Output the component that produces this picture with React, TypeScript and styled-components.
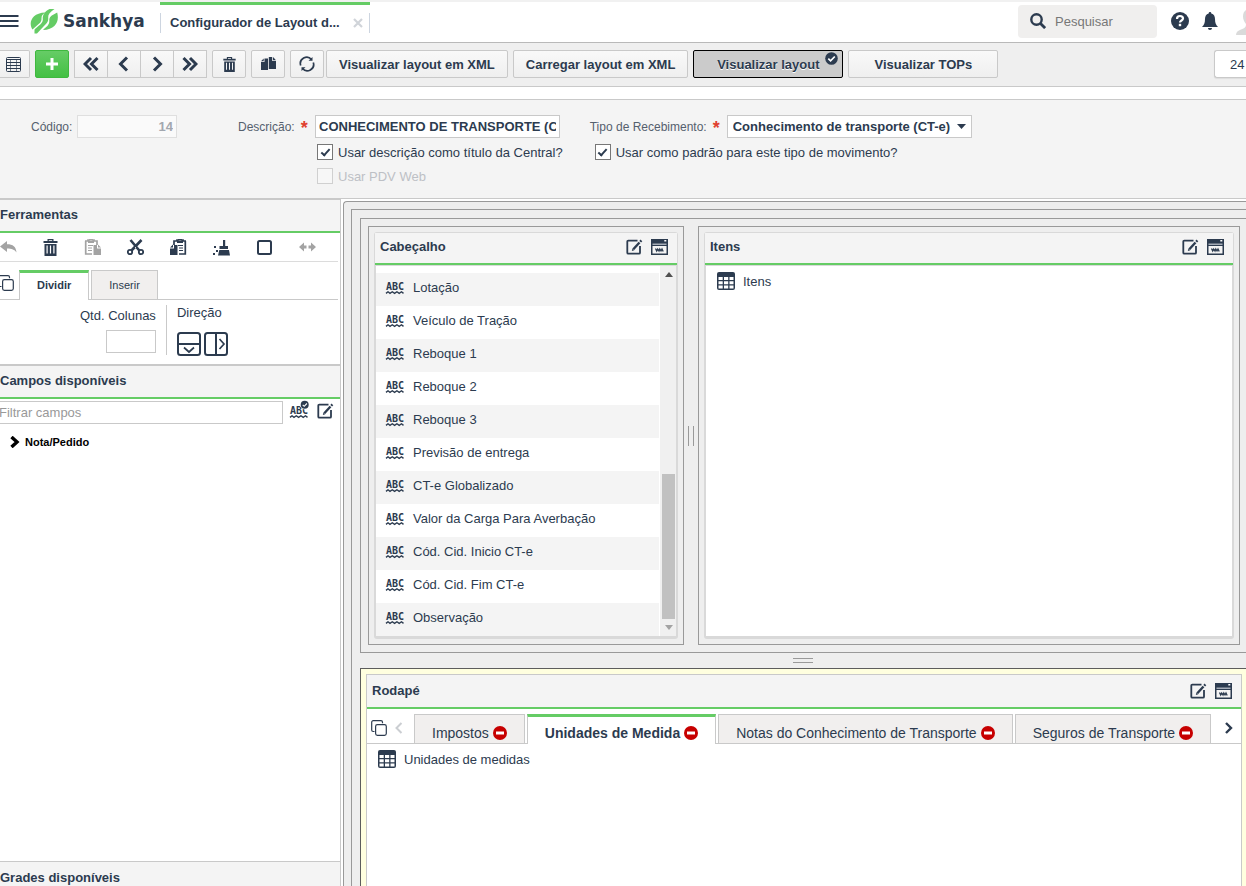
import React from "react";
import styled, { createGlobalStyle, css } from "styled-components";

const ink = "#2c3b4f";
const green = "#65cc65";
const line = "#c9c9c9";

const GlobalStyle = createGlobalStyle`
  *, *::before, *::after { box-sizing: border-box; }
  html, body { margin: 0; background: #fff; }
  body, button, input, select {
    font-family: "Liberation Sans", Arial, sans-serif;
    font-size: 13px;
    color: ${ink};
  }
  button { margin: 0; padding: 0; border: 0; background: none; cursor: pointer; }
  svg { display: block; flex: none; }
  h1, h2, ul { margin: 0; padding: 0; }
  ul { list-style: none; }
`;

/* ---------- shell ---------- */

const Page = styled.div`
  height: 100vh;
  display: flex;
  flex-direction: column;
  overflow: hidden;
`;

const Header = styled.header`
  flex: none;
  height: 43px;
  display: flex;
  align-items: flex-start;
  border-top: 2px solid #f1f1f1;
  border-bottom: 1px solid #b9b9b9;
  overflow: hidden;
`;

const HeaderPart = styled.div<{ $gap?: number }>`
  height: 38px;
  display: flex;
  align-items: center;
  gap: ${(p) => p.$gap ?? 0}px;
`;

const Brand = styled.a`
  display: flex;
  align-items: center;
  gap: 5px;
  width: 130px;
  margin-left: 11px;
  color: ${ink};
  text-decoration: none;
  font: bold 17px "DejaVu Sans", sans-serif;
`;

const PageTab = styled.div`
  width: 210px;
  height: 38px;
  border-top: 3px solid ${green};
  display: flex;
  align-items: center;
`;

const PageTabInner = styled.div`
  flex: 1;
  height: 20px;
  padding: 0 6px 0 9px;
  display: flex;
  align-items: center;
  justify-content: space-between;
  border: solid #cdd5e0;
  border-width: 0 1px;
  font-weight: bold;
`;

const SearchBox = styled.label`
  display: flex;
  align-items: center;
  gap: 9px;
  width: 139px;
  height: 33px;
  padding-left: 12px;
  border-radius: 4px;
  background: #f0efee;
  input {
    flex: 1;
    min-width: 0;
    border: 0;
    padding: 0;
    background: none;
    outline: none;
  }
  input::placeholder { color: #777; opacity: 1; }
`;

const HeaderRight = styled(HeaderPart)`
  margin-left: auto;
  margin-right: -18px;
`;

const HeaderIcons = styled.div`
  display: flex;
  align-items: center;
  margin-left: 14px;
  gap: 13px;
`;

const Avatar = styled.span`
  margin-left: 5px;
  margin-top: 2px;
`;

/* ---------- toolbar ---------- */

const Toolbar = styled.div`
  flex: none;
  height: 44px;
  padding-top: 7px;
  display: flex;
  gap: 5px;
  background: #efefef;
  border-bottom: 1px solid ${line};
  overflow: hidden;
`;

const ToolGroup = styled.div<{ $gap?: number }>`
  display: flex;
  gap: ${(p) => p.$gap ?? 0}px;
`;

const ToolButton = styled.button<{ $tone?: "primary" | "pressed"; $wide?: boolean; $cut?: boolean }>`
  position: relative;
  display: flex;
  align-items: center;
  justify-content: center;
  height: 28px;
  min-width: ${(p) => (p.$wide ? 150 : 34)}px;
  padding: 0 ${(p) => (p.$wide ? 12 : 0)}px;
  border: 1px solid ${line};
  border-radius: 2px;
  background: linear-gradient(#f9f9f9, #efefef);
  font-weight: bold;
  white-space: nowrap;
  ${(p) => p.$cut && css`
    min-width: 30px;
    padding-right: 2px;
    border-left: 0;
    border-radius: 0 2px 2px 0;
  `}
  ${(p) => p.$tone === "primary" && css`
    border-color: #3fb83f;
    background: linear-gradient(#66cc66, #43c043);
  `}
  ${(p) => p.$tone === "pressed" && css`
    border-color: #000;
    background: #cbcbcb;
    text-shadow: 0 1px 0 #fff;
  `}
`;

const NavGroup = styled.div`
  display: flex;
  ${ToolButton} + ${ToolButton} { margin-left: -1px; }
  ${ToolButton} { border-radius: 0; }
`;

const PressedMark = styled.span`
  position: absolute;
  top: 1px;
  right: 4px;
`;

const PageCount = styled.div`
  margin-left: auto;
  width: 32px;
  height: 28px;
  padding-left: 15px;
  line-height: 27px;
  border: 1px solid ${line};
  border-right: 0;
  border-radius: 3px 0 0 3px;
  background: #fff;
  box-shadow: 0 1px 1px #ddd;
`;

/* ---------- form ---------- */

const FormArea = styled.form`
  flex: none;
  display: flex;
  margin-top: 12px;
  padding: 15px 0 14px 31px;
  background: #f4f4f4;
  border-top: 1px solid ${line};
  border-bottom: 1px solid ${line};
  white-space: nowrap;
`;

const FormColumn = styled.div<{ $before?: number }>`
  margin-left: ${(p) => p.$before ?? 0}px;
`;

const Field = styled.div`
  display: flex;
  align-items: center;
  height: 23px;
`;

const FieldLabel = styled.label<{ $w: number }>`
  width: ${(p) => p.$w}px;
  display: flex;
  gap: 6px;
  font-size: 12px;
  color: #55606e;
  span {
    color: #e0402f;
    font-size: 18px;
    font-weight: bold;
    line-height: 16px;
    height: 10px;
  }
`;

const TextInput = styled.input<{ $w?: string }>`
  width: ${(p) => p.$w ?? "100%"};
  height: 23px;
  padding: 0 3px;
  border: 1px solid ${line};
  border-radius: 0;
  background: #fff;
  font-weight: bold;
  outline: none;
  &:disabled {
    border-color: #dfdfdf;
    background: #fafafa;
    color: #a2a7af;
    text-align: right;
  }
  &::placeholder { color: #999; font-weight: normal; opacity: 1; }
`;

const FilterInput = styled(TextInput)`
  flex: 1;
  min-width: 0;
  margin-left: -5px;
`;

const SelectWrap = styled.div`
  display: grid;
  align-items: center;
  width: 245px;
  height: 23px;
  select, svg { grid-area: 1 / 1; }
  svg { justify-self: end; margin-right: 6px; pointer-events: none; }
  select {
    width: 100%;
    height: 23px;
    padding: 0 18px 0 5px;
    appearance: none;
    border: 1px solid ${line};
    border-radius: 0;
    background: #fff;
    font-weight: bold;
  }
`;

const CheckLine = styled.label<{ $indent: number; $off?: boolean }>`
  display: flex;
  align-items: center;
  gap: 5px;
  height: 16px;
  margin-top: ${(p) => (p.$off ? 8 : 6)}px;
  margin-left: ${(p) => p.$indent}px;
  color: ${(p) => (p.$off ? "#bdc0c5" : ink)};
`;

const CheckInput = styled.input`
  appearance: none;
  width: 16px;
  height: 16px;
  margin: 0;
  border: 1px solid #777;
  background: #fff;
  display: grid;
  place-items: center;
  &:disabled { border-color: #d0d0d0; background: #f7f7f7; }
  &:checked::after {
    content: "";
    width: 5px;
    height: 9px;
    margin-bottom: 2px;
    border: solid ${ink};
    border-width: 0 2px 2px 0;
    transform: rotate(42deg);
  }
`;

/* ---------- side panel ---------- */

const Workspace = styled.main`
  flex: 1;
  min-height: 0;
  display: flex;
`;

const Side = styled.aside`
  flex: none;
  width: 341px;
  display: flex;
  flex-direction: column;
  border-top: 1px solid ${line};
  border-right: 1px solid ${line};
  overflow: hidden;
`;

const SideTitle = styled.h2<{ $ruled?: boolean }>`
  flex: none;
  height: ${(p) => (p.$ruled ? 35 : 33)}px;
  line-height: 29px;
  font-size: 13px;
  background: #f4f4f4;
  border-bottom: 2px solid ${green};
  border-top: ${(p) => (p.$ruled ? 2 : 0)}px solid ${line};
`;

const SideFooter = styled.div`
  flex: none;
  height: 25px;
  overflow: hidden;
  ${SideTitle} { border-top-width: 1px; line-height: 31px; }
`;

const IconRow = styled.div`
  flex: none;
  display: flex;
  align-items: center;
  justify-content: space-between;
  height: 29px;
  margin-right: 2px;
  padding-right: 22px;
  border-bottom: 1px solid #dcdcdc;
`;

const IconButton = styled.button<{ $off?: boolean }>`
  display: flex;
  color: ${(p) => (p.$off ? "#a3a3a3" : ink)};
`;

const SideTabs = styled.div`
  flex: none;
  display: flex;
  align-items: flex-end;
  gap: 2px;
  height: 38px;
  margin-right: 2px;
  border-bottom: 1px solid ${line};
`;

const TabButton = styled.button<{ $on?: boolean; $big?: boolean }>`
  display: flex;
  align-items: center;
  justify-content: center;
  gap: 4px;
  height: ${(p) => (p.$on ? 30 : 29)}px;
  margin-bottom: ${(p) => (p.$on ? -1 : 0)}px;
  padding: ${(p) => (p.$big ? "8px 17px 0" : "0 17px")};
  border: 1px solid ${line};
  border-bottom: 0;
  background: #f1efee;
  font-size: ${(p) => (p.$big ? 14 : 11)}px;
  white-space: nowrap;
  ${(p) => p.$on && css`
    background: #fff;
    border-top: 3px solid ${green};
    font-weight: bold;
    padding-top: ${p.$big ? 4 : 0}px;
    padding-bottom: ${p.$big ? 0 : 4}px;
  `}
`;

const TabLead = styled.div`
  width: 17px;
  height: 100%;
  display: flex;
  align-items: center;
  justify-content: flex-end;
  padding-top: 4px;
  button { margin-right: 3px; }
`;

const SplitTools = styled.div`
  flex: none;
  display: flex;
  height: 64px;
  padding: 5px 0 9px 80px;
`;

const ColumnsField = styled.div`
  display: flex;
  flex-direction: column;
  align-items: flex-end;
  gap: 7px;
  height: 50px;
  padding: 3px 10px 0 0;
  border-right: 1px solid ${line};
  line-height: 15px;
`;

const DirectionField = styled.div`
  padding-left: 10px;
  line-height: 15px;
  div { display: flex; gap: 3px; margin-top: 12px; }
`;

const FilterRow = styled.div`
  flex: none;
  display: flex;
  align-items: flex-start;
  height: 25px;
  padding: 2px 6px 0 0;
`;

const FilterIcons = styled.div`
  display: flex;
  align-items: flex-end;
  gap: 8px;
  margin-left: 7px;
`;

const Tree = styled.ul`
  flex: 1;
  min-height: 0;
  padding: 9px 0 0 9px;
  button {
    display: flex;
    align-items: center;
    gap: 4px;
    height: 18px;
    font-size: 11px;
    font-weight: bold;
    color: #000;
  }
`;

/* ---------- canvas ---------- */

const Canvas = styled.section`
  flex: 1;
  min-width: 0;
  margin: 2px 0 0 2px;
  padding: 7px 0 0 7px;
  display: flex;
  border: solid #999;
  border-width: 1px 0 0 1px;
  border-radius: 4px 0 0 0;
  background: #eee;
`;

const CanvasInner = styled.div`
  flex: 1;
  min-width: 0;
  padding: 8px 0 0 8px;
  display: flex;
  flex-direction: column;
  border: solid #999;
  border-width: 1px 0 0 1px;
`;

const SplitRow = styled.div`
  flex: none;
  display: flex;
  padding: 7px 6px 7px 7px;
  border: solid #999;
  border-width: 1px 0 1px 1px;
`;

const Slot = styled.div<{ $w?: number }>`
  flex: ${(p) => (p.$w ? `0 0 ${p.$w}px` : 1)};
  min-width: 0;
  padding: 5px;
  display: flex;
  border: 1px solid #999;
`;

const FooterSlot = styled.div`
  flex: 1;
  min-height: 0;
  display: flex;
  padding: 5px 4px 0 5px;
  border: solid #5c5c5c;
  border-width: 1px 0 0 1px;
  background: #ffffdf;
`;

const Grip = styled.div<{ $across?: boolean }>`
  flex: none;
  display: flex;
  align-items: center;
  justify-content: center;
  width: ${(p) => (p.$across ? "auto" : "14px")};
  height: ${(p) => (p.$across ? "15px" : "auto")};
  &::before {
    content: "";
    width: ${(p) => (p.$across ? 20 : 6)}px;
    height: ${(p) => (p.$across ? 5 : 20)}px;
    border: solid #999;
    border-width: ${(p) => (p.$across ? "1px 0" : "0 1px")};
  }
`;

const Panel = styled.div<{ $flat?: boolean }>`
  flex: 1;
  min-width: 0;
  display: flex;
  flex-direction: column;
  border: 1px solid ${(p) => (p.$flat ? line : "#d9d9d9")};
  border-bottom-width: ${(p) => (p.$flat ? 0 : 3)}px;
  border-radius: ${(p) => (p.$flat ? 0 : 3)}px;
  background: #fff;
`;

const PanelHead = styled.div<{ $tall?: boolean }>`
  flex: none;
  display: flex;
  align-items: center;
  justify-content: space-between;
  height: ${(p) => (p.$tall ? 34 : 32)}px;
  padding: 0 9px ${(p) => (p.$tall ? 1 : 3)}px 5px;
  background: #f4f4f4;
  border-bottom: 2px solid ${green};
  h2 { font-size: 13px; }
  div { display: flex; gap: 8px; }
`;

const PanelBody = styled.div`
  flex: 1;
  display: flex;
  border: 1px solid #d9d9d9;
  border-bottom: 0;
`;

const FieldList = styled.ul`
  flex: 1;
  padding-top: 7px;
`;

const FieldItem = styled.li<{ $shaded?: boolean }>`
  display: flex;
  align-items: center;
  gap: 8px;
  height: 33px;
  padding: 0 0 4px 10px;
  background: ${(p) => (p.$shaded ? "#f4f4f4" : "#fff")};
`;

const GridItem = styled.div`
  display: flex;
  align-items: center;
  gap: 8px;
  height: 30px;
  padding-left: 11px;
`;

const ScrollTrack = styled.div`
  display: flex;
  flex-direction: column;
  align-items: center;
  justify-content: space-between;
  width: 16px;
  padding: 6px 0 6px 1px;
  margin-left: 1px;
  background: #f0f0f0;
`;

const ScrollEnd = styled.div`
  display: flex;
  flex-direction: column;
  align-items: center;
  gap: 6px;
`;

const ScrollThumb = styled.div`
  width: 13px;
  height: 145px;
  background: #c1c1c1;
`;

const PanelTabs = styled.div`
  flex: none;
  display: flex;
  align-items: flex-end;
  gap: 2px;
  height: 35px;
  border-bottom: 1px solid ${line};
`;

const TabsLead = styled.div`
  display: flex;
  align-items: center;
  gap: 8px;
  width: 45px;
  height: 30px;
  padding-left: 4px;
`;

const TabsNext = styled.button`
  display: flex;
  align-items: center;
  height: 30px;
  margin-left: auto;
  margin-right: 8px;
`;

/* ---------- icons ---------- */

const Menu = () => (
  <svg width="19" height="14" viewBox="0 0 19 14" fill={ink}>
    <path d="M0 1h18.500v2H0zM0 6h18.500v2H0zM0 11h18.500v2H0z" />
  </svg>
);

const Leaf = () => (
  <svg width="28" height="25" viewBox="0 0 28 25" fill={green}>
    <path d="M15.500 3.500C12.500 5 11.300 7 11.500 10c.2 3-2 4.500-4.500 6.500L2.500 20.500C-1.500 15 .5 4 15.500 3.500z" />
    <path d="M24.500 0C20 3 18 5.500 18.200 8.500c.3 4-1 5.500-4 8.200L7 24.500H4.500v-4C8 17 13 14.500 12.800 10.500 12.500 6 14.500 2.500 19.500 0z" />
    <path d="M27.200 3.500C29.500 12 26 20.500 13 21c3.500-3 6.500-5 6.300-9-.2-3.500.7-5 7.900-8.500z" />
  </svg>
);

const Chevrons = ({ left, twice }: { left?: boolean; twice?: boolean }) => (
  <svg width="16" height="16" viewBox="0 0 16 16" fill="none" stroke={ink} strokeWidth="3">
    <g transform={left ? "matrix(-1 0 0 1 16 0)" : undefined}>
      {twice ? <path d="M1.500 2 7.500 8l-6 6M8 2 14 8l-6 6" /> : <path d="M5 1.500l6.500 6.500L5 14.500" />}
    </g>
  </svg>
);

const Grid = () => (
  <svg width="15" height="15" viewBox="0 0 15 15" fill="none" stroke={ink}>
    <rect x=".5" y=".5" width="14" height="14" rx="1" />
    <path d="M1 2.500h13M1 5.500h13M1 8.500h13M1 11.500h13" />
    <path d="M4.500 3v11M10.500 3v11" opacity=".6" />
  </svg>
);

const Plus = () => (
  <svg width="12" height="12" viewBox="0 0 12 12" fill="#fff">
    <path d="M4.500 0h3v4.500H12v3H7.500V12h-3V7.500H0v-3h4.500z" />
  </svg>
);

const Trash = ({ size = 15 }: { size?: number }) => (
  <svg width={size - 2} height={size} viewBox="0 0 14 17" fill="currentColor">
    <path d="M4 2V0h6v2h4v2H0V2zM5.300 1.200V2h3.400v-.8z" fillRule="evenodd" />
    <path d="M1 5h12v12H1zM3 6.500v8h1.200v-8zM6.400 6.500v8h1.200v-8zM9.800 6.500v8H11v-8z" fillRule="evenodd" />
  </svg>
);

const Files = () => (
  <svg width="15" height="14" viewBox="0 0 15 14" fill={ink}>
    <path d="M3.500 1.500H7V13H0V5h3.500zM0 4.200 2.700 1.500v2.700z" />
    <path d="M7.800 0h3.400v4H15v8H7.800z" />
    <path d="M12 0l3 3.200h-3z" />
  </svg>
);

const Refresh = () => (
  <svg width="16" height="16" viewBox="0 0 16 16" fill="none" stroke={ink} strokeWidth="1.700">
    <path d="M1.700 9.500A6.300 6.300 0 0 1 12.500 3.500M14.300 6.500A6.300 6.300 0 0 1 3.500 12.500" />
    <path d="M9.500 4.700h4V1zM6.500 11.300h-4V15z" fill={ink} stroke="none" />
  </svg>
);

const CheckBadge = ({ size = 13 }: { size?: number }) => (
  <svg width={size} height={size} viewBox="0 0 13 13">
    <circle cx="6.500" cy="6.500" r="6.300" fill={ink} />
    <path d="M3.300 6.600l2.300 2.300 4.200-4.400" fill="none" stroke="#fff" strokeWidth="1.700" />
  </svg>
);

const Search = () => (
  <svg width="16" height="16" viewBox="0 0 16 16" fill="none" stroke={ink}>
    <circle cx="6.500" cy="6.500" r="5.200" strokeWidth="2.400" />
    <path d="M10.500 10.500l4.600 4.600" strokeWidth="2.800" />
  </svg>
);

const Help = () => (
  <svg width="18" height="18" viewBox="0 0 18 18">
    <circle cx="9" cy="9" r="9" fill={ink} />
    <path d="M6 7c0-2 1.300-3 3-3s3 1 3 2.600C12 8.500 9 8.500 9 10.500" fill="none" stroke="#fff" strokeWidth="2.200" />
    <path d="M7.800 11.800h2.400v2.400H7.800z" fill="#fff" />
  </svg>
);

const Bell = () => (
  <svg width="16" height="18" viewBox="0 0 16 18" fill={ink}>
    <path d="M8 0c.9 0 1.300.6 1.300 1.400C12 2 13 4.500 13 7c0 4 1 6 3 8H0c2-2 3-4 3-8 0-2.500 1-5 3.700-5.600C6.700.6 7.100 0 8 0zM6 16h4c0 1.200-.8 2-2 2s-2-.8-2-2z" />
  </svg>
);

const Person = () => (
  <svg width="28" height="26" viewBox="0 0 28 26" fill="#dadada">
    <path d="M14 0c4.500 0 7 3 7 7.500 0 3-1.500 6-3 7.500 0 3 1 4 5 5.500 3 1.200 5 2.500 5 5.500H0c0-3 2-4.300 5-5.500 4-1.500 5-2.500 5-5.500-1.500-1.500-3-4.500-3-7.500C7 3 9.500 0 14 0z" />
  </svg>
);

const Undo = () => (
  <svg width="17" height="14" viewBox="0 0 17 14" fill="currentColor">
    <path d="M7 1v3.300c6 0 9 2.500 9.500 8.200C14.500 9.500 12 8.500 7 8.500V12L0 6.400z" />
  </svg>
);

const Paste = ({ flip }: { flip?: boolean }) => (
  <svg width="17" height="16" viewBox="0 0 17 16">
    <g transform={flip ? "matrix(-1 0 0 1 17 0)" : undefined}>
      <path d="M1 2h3V1h1.500a1.700 1.700 0 0 1 3 0H10v1h3v4M1.700 2v13H8" fill="none" stroke="currentColor" strokeWidth="1.700" />
      <path d="M4 1.500h6V4H4z" fill="currentColor" />
      <path d="M4 6.500h5M4 9h4M4 11.500h4" stroke="currentColor" strokeWidth="1.200" />
      <path d="M9.500 6H13v3.500h4V16H9.500zM14 5.500l3 3h-3z" fill="currentColor" />
    </g>
  </svg>
);

const Scissors = () => (
  <svg width="17" height="17" viewBox="0 0 17 17" fill="none" stroke="currentColor">
    <circle cx="3" cy="13" r="2.200" strokeWidth="1.800" />
    <circle cx="14" cy="13" r="2.200" strokeWidth="1.800" />
    <path d="M4.500 11.500 14.500 1M12.300 11.500 3.500 1" strokeWidth="2.600" />
    <path d="M8.500 9v-.8" stroke="#fff" />
  </svg>
);

const Broom = () => (
  <svg width="17" height="17" viewBox="0 0 17 17" fill="currentColor">
    <path d="M10 1h2.200v6H15v3H6.500V7H10zM6.300 11H16l1 5.500H5zM1 7h2v2H1zM3 11h2v2H3zM0 14h2v2H0z" />
  </svg>
);

const Square = () => (
  <svg width="17" height="17" viewBox="0 0 17 17" fill="none" stroke="currentColor" strokeWidth="2">
    <rect x="2" y="2" width="13" height="13" rx="1.500" />
  </svg>
);

const Arrows = () => (
  <svg width="17" height="10" viewBox="0 0 17 10" fill="currentColor">
    <path d="M0 5l5-4.500v3h2.500v3H5v3zM17 5l-5-4.500v3H9.500v3H12v3z" />
  </svg>
);

const Stack = () => (
  <svg width="16" height="16" viewBox="0 0 16 16" fill="none" stroke={ink} strokeWidth="1.200">
    <rect x="4.600" y="4.600" width="10.700" height="10.700" rx="1.800" />
    <path d="M3.500 11.500H2.200A1.500 1.500 0 0 1 .7 10V2.200A1.500 1.500 0 0 1 2.200.7H10a1.500 1.500 0 0 1 1.500 1.500v1" />
  </svg>
);

const SplitDown = ({ side }: { side?: boolean }) => (
  <svg width="24" height="24" viewBox="0 0 24 24" fill="none" stroke={ink} strokeWidth="2">
    <rect x="1" y="1" width="22" height="22" rx="2.500" />
    <g transform={side ? "matrix(0 1 1 0 0 0)" : undefined}>
      <path d="M1 12h22" />
      <path d="M7 15.500l5 4.500 5-4.500" strokeWidth="1.700" />
    </g>
  </svg>
);

const Abc = ({ checked }: { checked?: boolean }) => (
  <svg width="19" height={checked ? 18 : 12} viewBox={checked ? "0 -5 19 18" : "0 0 19 12"} overflow="visible">
    <text x="0" y="7.500" fill={ink} fontSize="10" fontWeight="bold" fontFamily="DejaVu Sans Mono, monospace">ABC</text>
    <path d="M0 11.400l2-1.600 2 1.600 2.300-1.600 2.300 1.600 2.300-1.600 2.300 1.600 2.300-1.600 2 1.600" fill="none" stroke={ink} strokeWidth="1.400" />
    {checked && (
      <g transform="translate(10.500 -5.500)">
        <circle cx="4.200" cy="4.200" r="4.800" fill="#fff" />
        <circle cx="4.200" cy="4.200" r="4" fill={ink} />
        <path d="M2.200 4.300l1.500 1.500L6.400 3" fill="none" stroke="#fff" strokeWidth="1.100" />
      </g>
    )}
  </svg>
);

const Edit = () => (
  <svg width="17" height="16" viewBox="0 0 17 16" fill="none" stroke={ink}>
    <path d="M11.500 1.700H2.300a1 1 0 0 0-1 1v11a1 1 0 0 0 1 1H13a1 1 0 0 0 1-1V7" strokeWidth="1.800" />
    <path d="M7.300 10.300l6.200-6.800" strokeWidth="2.400" />
    <path d="M14.200 2.700l1.200-1.300" strokeWidth="2.400" />
    <path d="M5.800 12l.7-2.500 1.800 1.700z" fill={ink} stroke="none" />
  </svg>
);

const WindowIcon = () => (
  <svg width="17" height="16" viewBox="0 0 17 16">
    <path d="M0 0h17v16H0z" fill={ink} />
    <path d="M13.300 1h2v1.500h-2z" fill="#fff" />
    <path d="M1.500 4.600h14v1.200h-14z" fill="#c5cad1" />
    <path d="M1.500 7h14v7.500h-14z" fill="#f4f4f4" />
    <path d="M4.500 9.500l1.200 2.500 1-2 1.300 2 .8-2 1.200 2 1-2 1.200 2.500" fill="none" stroke={ink} strokeWidth="1.300" />
  </svg>
);

const TableIcon = () => (
  <svg width="18" height="18" viewBox="0 0 18 18">
    <rect width="18" height="18" rx="2" fill={ink} />
    <path d="M1.500 5h4.200v3H1.500zM7 5h4.200v3H7zM12.500 5h4v3h-4zM1.500 9.300h4.200v3H1.500zM7 9.300h4.200v3H7zM12.500 9.300h4v3h-4zM1.500 13.600h4.200v3H1.500zM7 13.600h4.200v3H7zM12.500 13.600h4v3h-4z" fill="#fff" />
  </svg>
);

const Minus = () => (
  <svg width="14" height="14" viewBox="0 0 14 14">
    <circle cx="7" cy="7" r="7" fill="#c70000" />
    <path d="M3 5.500h8v3H3z" fill="#fff" />
  </svg>
);

const Caret = ({ up, color = ink, w = 9 }: { up?: boolean; color?: string; w?: number }) => (
  <svg width={w} height="5" viewBox="0 0 10 5" preserveAspectRatio="none" fill={color}>
    <path d={up ? "M0 5l5-5 5 5z" : "M0 0h10L5 5z"} />
  </svg>
);

const SmallChevron = ({ faint }: { faint?: boolean }) => (
  <svg width="8" height="12" viewBox="0 0 8 12" fill="none" stroke={faint ? "#cbced2" : ink} strokeWidth={faint ? 2 : 2.4}>
    <path d={faint ? "M6.500 1l-5 5 5 5" : "M1 1l5 5-5 5"} />
  </svg>
);

const Close = () => (
  <svg width="10" height="10" viewBox="0 0 10 10" stroke="#d0d4d9" strokeWidth="2.200">
    <path d="M1 1l8 8M9 1L1 9" />
  </svg>
);

const TreeArrow = () => (
  <svg width="12" height="12" viewBox="0 0 12 12" fill="none" stroke="#000" strokeWidth="3.400">
    <path d="M2.500 1l5.500 5-5.500 5" />
  </svg>
);

/* ---------- page ---------- */

const headerFields = [
  "Lotação",
  "Veículo de Tração",
  "Reboque 1",
  "Reboque 2",
  "Reboque 3",
  "Previsão de entrega",
  "CT-e Globalizado",
  "Valor da Carga Para Averbação",
  "Cód. Cid. Inicio CT-e",
  "Cód. Cid. Fim CT-e",
  "Observação",
];

const footerTabs = [
  { name: "Impostos" },
  { name: "Unidades de Medida", on: true },
  { name: "Notas do Conhecimento de Transporte" },
  { name: "Seguros de Transporte" },
];

const PanelTitle = ({ title, tall }: { title: string; tall?: boolean }) => (
  <PanelHead $tall={tall}>
    <h2>{title}</h2>
    <div>
      <IconButton aria-label="Editar"><Edit /></IconButton>
      <IconButton aria-label="Propriedades"><WindowIcon /></IconButton>
    </div>
  </PanelHead>
);

export default function App() {
  return (
    <Page>
      <GlobalStyle />
      <Header>
        <HeaderPart>
          <IconButton aria-label="Menu"><Menu /></IconButton>
          <Brand href="#"><Leaf />Sankhya</Brand>
        </HeaderPart>
        <PageTab>
          <PageTabInner>
            Configurador de Layout d...
            <IconButton aria-label="Fechar"><Close /></IconButton>
          </PageTabInner>
        </PageTab>
        <HeaderRight>
          <SearchBox>
            <Search />
            <input placeholder="Pesquisar" aria-label="Pesquisar" />
          </SearchBox>
          <HeaderIcons>
            <IconButton aria-label="Ajuda"><Help /></IconButton>
            <IconButton aria-label="Notificações"><Bell /></IconButton>
            <Avatar><Person /></Avatar>
          </HeaderIcons>
        </HeaderRight>
      </Header>

      <Toolbar>
        <ToolButton $cut aria-label="Modo grade"><Grid /></ToolButton>
        <ToolButton $tone="primary" aria-label="Novo"><Plus /></ToolButton>
        <NavGroup>
          <ToolButton aria-label="Primeiro"><Chevrons left twice /></ToolButton>
          <ToolButton aria-label="Anterior"><Chevrons left /></ToolButton>
          <ToolButton aria-label="Próximo"><Chevrons /></ToolButton>
          <ToolButton aria-label="Último"><Chevrons twice /></ToolButton>
        </NavGroup>
        <ToolButton aria-label="Excluir"><Trash /></ToolButton>
        <ToolButton aria-label="Duplicar"><Files /></ToolButton>
        <ToolGroup $gap={2}>
          <ToolButton aria-label="Atualizar"><Refresh /></ToolButton>
          <ToolButton $wide>Visualizar layout em XML</ToolButton>
        </ToolGroup>
        <ToolButton $wide>Carregar layout em XML</ToolButton>
        <ToolButton $wide $tone="pressed" aria-pressed="true">
          Visualizar layout
          <PressedMark><CheckBadge /></PressedMark>
        </ToolButton>
        <ToolButton $wide>Visualizar TOPs</ToolButton>
        <PageCount>24</PageCount>
      </Toolbar>

      <FormArea>
        <FormColumn>
          <Field>
            <FieldLabel $w={46} htmlFor="codigo">Código:</FieldLabel>
            <TextInput id="codigo" $w="100px" defaultValue="14" disabled />
          </Field>
        </FormColumn>
        <FormColumn $before={61}>
          <Field>
            <FieldLabel $w={77} htmlFor="descricao">Descrição: <span>*</span></FieldLabel>
            <TextInput id="descricao" $w="245px" defaultValue="CONHECIMENTO DE TRANSPORTE (CT-E)" />
          </Field>
          <CheckLine $indent={79}>
            <CheckInput type="checkbox" defaultChecked />
            Usar descrição como título da Central?
          </CheckLine>
          <CheckLine $indent={79} $off>
            <CheckInput type="checkbox" disabled />
            Usar PDV Web
          </CheckLine>
        </FormColumn>
        <FormColumn $before={27}>
          <Field>
            <FieldLabel $w={137} htmlFor="tipo">Tipo de Recebimento: <span>*</span></FieldLabel>
            <SelectWrap>
              <select id="tipo"><option>Conhecimento de transporte (CT-e)</option></select>
              <Caret />
            </SelectWrap>
          </Field>
          <CheckLine $indent={5}>
            <CheckInput type="checkbox" defaultChecked />
            Usar como padrão para este tipo de movimento?
          </CheckLine>
        </FormColumn>
      </FormArea>

      <Workspace>
        <Side>
          <SideTitle>Ferramentas</SideTitle>
          <IconRow>
            <IconButton $off aria-label="Desfazer"><Undo /></IconButton>
            <IconButton aria-label="Excluir"><Trash size={17} /></IconButton>
            <IconButton $off aria-label="Colar"><Paste /></IconButton>
            <IconButton aria-label="Recortar"><Scissors /></IconButton>
            <IconButton aria-label="Copiar"><Paste flip /></IconButton>
            <IconButton aria-label="Limpar"><Broom /></IconButton>
            <IconButton aria-label="Quadro"><Square /></IconButton>
            <IconButton $off aria-label="Expandir"><Arrows /></IconButton>
          </IconRow>
          <SideTabs>
            <TabLead><IconButton aria-label="Abas"><Stack /></IconButton></TabLead>
            <TabButton $on>Dividir</TabButton>
            <TabButton>Inserir</TabButton>
          </SideTabs>
          <SplitTools>
            <ColumnsField>
              <label htmlFor="colunas">Qtd. Colunas</label>
              <TextInput id="colunas" $w="50px" />
            </ColumnsField>
            <DirectionField>
              Direção
              <div>
                <IconButton aria-label="Horizontal"><SplitDown /></IconButton>
                <IconButton aria-label="Vertical"><SplitDown side /></IconButton>
              </div>
            </DirectionField>
          </SplitTools>
          <SideTitle $ruled>Campos disponíveis</SideTitle>
          <FilterRow>
            <FilterInput placeholder="Filtrar campos" aria-label="Filtrar campos" />
            <FilterIcons>
              <IconButton aria-label="Campos"><Abc checked /></IconButton>
              <IconButton aria-label="Editar"><Edit /></IconButton>
            </FilterIcons>
          </FilterRow>
          <Tree>
            <li><button><TreeArrow />Nota/Pedido</button></li>
          </Tree>
          <SideFooter><SideTitle $ruled>Grades disponíveis</SideTitle></SideFooter>
        </Side>

        <Canvas>
          <CanvasInner>
            <SplitRow>
              <Slot $w={316}>
                <Panel>
                  <PanelTitle title="Cabeçalho" />
                  <PanelBody>
                    <FieldList>
                      {headerFields.map((name, i) => (
                        <FieldItem key={name} $shaded={i % 2 === 0}><Abc />{name}</FieldItem>
                      ))}
                    </FieldList>
                    <ScrollTrack>
                      <Caret up color="#505050" w={8} />
                      <ScrollEnd>
                        <ScrollThumb />
                        <Caret color="#a3a3a3" w={8} />
                      </ScrollEnd>
                    </ScrollTrack>
                  </PanelBody>
                </Panel>
              </Slot>
              <Grip />
              <Slot>
                <Panel>
                  <PanelTitle title="Itens" />
                  <PanelBody><GridItem><TableIcon />Itens</GridItem></PanelBody>
                </Panel>
              </Slot>
            </SplitRow>
            <Grip $across />
            <FooterSlot>
              <Panel $flat>
                <PanelTitle title="Rodapé" tall />
                <PanelTabs>
                  <TabsLead>
                    <IconButton aria-label="Abas"><Stack /></IconButton>
                    <IconButton aria-label="Anterior"><SmallChevron faint /></IconButton>
                  </TabsLead>
                  {footerTabs.map((t) => (
                    <TabButton key={t.name} $big $on={t.on}>{t.name}<Minus /></TabButton>
                  ))}
                  <TabsNext aria-label="Próximo"><SmallChevron /></TabsNext>
                </PanelTabs>
                <GridItem><TableIcon />Unidades de medidas</GridItem>
              </Panel>
            </FooterSlot>
          </CanvasInner>
        </Canvas>
      </Workspace>
    </Page>
  );
}
